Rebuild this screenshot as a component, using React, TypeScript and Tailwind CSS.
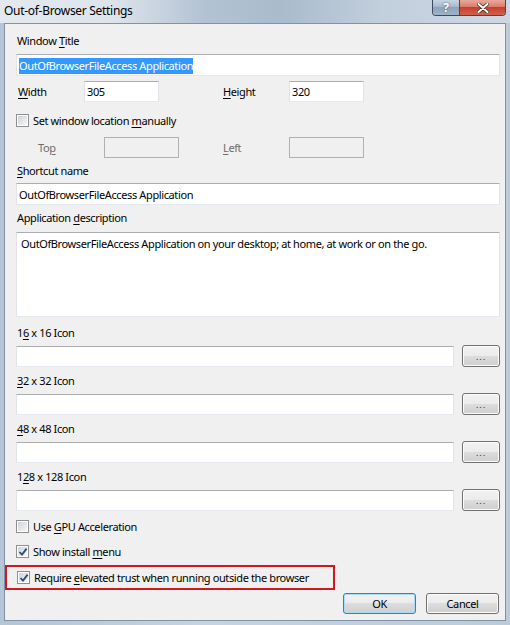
const ui = "font-['Noto_Sans',sans-serif] text-[11px] tracking-[-0.38px] leading-[16px] text-black";

function U({ children }: { children: string }) {
  return <span className="underline underline-offset-[2px] decoration-[1px]">{children}</span>;
}

function Box({ checked = false }: { checked?: boolean }) {
  return (
    <div className="relative h-[13px] w-[13px] shrink-0 border border-[#8e8f8f] bg-white p-[1px]">
      <div className="h-full w-full bg-gradient-to-br from-[#cfd3d8] to-[#f7f7f7]" />
      {checked && (
        <svg className="absolute left-[1px] top-[1px]" width="10" height="10" viewBox="0 0 10 10">
          <path d="M1.5 5 L4 7.6 L8.6 1.6" fill="none" stroke="#2c4a7c" strokeWidth="1.8" />
        </svg>
      )}
    </div>
  );
}

function Field({
  value,
  disabled = false,
  className = "",
  children,
}: {
  value?: string;
  disabled?: boolean;
  className?: string;
  children?: React.ReactNode;
}) {
  const look = disabled
    ? "border-[#adb2b5] bg-[#f0f0f0]"
    : "border-[#e2e3ea] border-t-[#abadb3] border-b-[#e3e9ef] bg-white";
  return (
    <div className={`flex items-center border px-[2px] pt-[1px] ${look} ${className}`}>
      {children ?? value}
    </div>
  );
}

function Btn({ children, primary = false, className = "" }: { children: React.ReactNode; primary?: boolean; className?: string }) {
  return (
    <div
      className={`flex items-center justify-center rounded-[3px] border ${
        primary ? "border-[#3c7fb1] shadow-[inset_0_0_0_1px_#a9dcf6]" : "border-[#707070] shadow-[inset_0_0_0_1px_#fcfcfc]"
      } bg-[linear-gradient(#f2f2f2_0%,#ebebeb_50%,#dddddd_50%,#cfcfcf_100%)] ${className}`}
    >
      {children}
    </div>
  );
}

function Check({ label, checked }: { label: React.ReactNode; checked?: boolean }) {
  return (
    <div className="flex h-[16px] items-center gap-[4px] whitespace-nowrap">
      <Box checked={checked} />
      <span className="pt-[1px]">{label}</span>
    </div>
  );
}

function IconRow({ label }: { label: React.ReactNode }) {
  return (
    <>
      <div className="mt-[5px] h-[16px] pl-[1px] pt-[1px]">{label}</div>
      <div className="mt-[5px] flex h-[22px] items-end gap-[8px]">
        <Field className="h-[21px] w-[438px]" />
        <Btn className="h-[22px] w-[38px] text-[9px] leading-none tracking-[1px] text-[#333]">...</Btn>
      </div>
    </>
  );
}

export default function App() {
  return (
    <div className={`${ui} flex h-[625px] w-[510px] flex-col bg-[linear-gradient(90deg,#b4c5d6,#c6d3e0_40%,#bccbda)]`}>
      {/* title bar */}
      <div className="relative flex h-[23px] shrink-0 items-start bg-[linear-gradient(90deg,#e3e9ef_0%,#dde4ec_22%,#b3c3d3_40%,#a9bbcc_55%,#c2cfdc_75%,#cdd8e3_100%)]">
        <span className="ml-[4px] mt-[2px] text-[12px] leading-[18px] tracking-[-0.3px]">Out-of-Browser Settings</span>
        <div className="absolute right-[4px] top-0 flex h-[16px] overflow-hidden rounded-b-[4px] border border-t-0 border-[#3b4a5c]">
          <div className="flex w-[27px] items-center justify-center border-r border-[#3b4a5c] bg-[linear-gradient(#c8d4e2,#a4b5c9_50%,#8ea3bb_50%,#9fb3c9)] text-[12px] font-bold leading-none text-white [text-shadow:0_0_2px_#3b4a5c]">
            ?
          </div>
          <div className="flex w-[45px] items-center justify-center bg-[linear-gradient(#e9a99b,#d87865_50%,#c7402c_50%,#d2604a)]">
            <svg width="12" height="10" viewBox="0 0 12 10">
              <path d="M1.5 1 L10.5 9 M10.5 1 L1.5 9" stroke="#3b2a28" strokeWidth="3.4" strokeLinecap="round" />
              <path d="M1.5 1 L10.5 9 M10.5 1 L1.5 9" stroke="#fff" strokeWidth="2" strokeLinecap="round" />
            </svg>
          </div>
        </div>
      </div>

      {/* client area */}
      <div className="ml-[4px] flex h-[598px] w-[502px] flex-col border border-[#7f92a7] bg-[#f0f0f0] pl-[11px] pr-[5px]">
        <div className="mt-[8px] h-[16px] pl-[1px] pt-[1px]">
          Window <U>T</U>itle
        </div>
        <Field className="mt-[6px] h-[22px] w-[484px]">
          <span className="bg-[#3399ff] text-white">OutOfBrowserFileAccess Application</span>
        </Field>

        <div className="mt-[5px] flex h-[21px] items-center">
          <span className="w-[68px] pl-[2px] pt-[1px]">
            <U>W</U>idth
          </span>
          <Field className="h-[21px] w-[75px]" value="305" />
          <span className="ml-[64px] w-[66px] pt-[1px]">
            <U>H</U>eight
          </span>
          <Field className="h-[21px] w-[75px]" value="320" />
        </div>

        <div className="mt-[10px]">
          <Check
            label={
              <>
                Set window location <U>m</U>anually
              </>
            }
          />
        </div>

        <div className="mt-[9px] flex h-[21px] items-center text-[#6d6d6d]">
          <span className="w-[88px] pl-[22px] pt-[1px]">
            To<U>p</U>
          </span>
          <Field disabled className="h-[21px] w-[75px]" />
          <span className="ml-[44px] w-[66px] pt-[1px]">
            <U>L</U>eft
          </span>
          <Field disabled className="h-[21px] w-[75px]" />
        </div>

        <div className="mt-[4px] h-[16px] pl-[1px] pt-[1px]">
          <U>S</U>hortcut name
        </div>
        <Field className="mt-[5px] h-[22px] w-[484px]" value="OutOfBrowserFileAccess Application" />

        <div className="mt-[4px] h-[16px] pl-[1px] pt-[1px]">
          Application <U>d</U>escription
        </div>
        <div className="mt-[7px] h-[85px] w-[484px] border border-[#e2e3ea] border-t-[#abadb3] border-b-[#e3e9ef] bg-white px-[4px] pt-[3px]">
          OutOfBrowserFileAccess Application on your desktop; at home, at work or on the go.
        </div>

        <div className="mt-[2px]" />
        <IconRow
          label={
            <>
              1<U>6</U> x 16 Icon
            </>
          }
        />
        <IconRow
          label={
            <>
              <U>3</U>2 x 32 Icon
            </>
          }
        />
        <IconRow
          label={
            <>
              <U>4</U>8 x 48 Icon
            </>
          }
        />
        <IconRow
          label={
            <>
              1<U>2</U>8 x 128 Icon
            </>
          }
        />

        <div className="mt-[7px]">
          <Check
            label={
              <>
                Use <U>G</U>PU Acceleration
              </>
            }
          />
        </div>
        <div className="mt-[9px]">
          <Check
            checked
            label={
              <>
                Show install <U>m</U>enu
              </>
            }
          />
        </div>

        <div className="-ml-[11px] mt-[6px] flex h-[25px] w-[330px] items-center border-2 border-[#d01820] pl-[10px]">
          <Check
            checked
            label={
              <>
                Require <U>e</U>levated trust when running outside the browser
              </>
            }
          />
        </div>

        <div className="mt-[3px] flex justify-end gap-[10px] pr-[1px]">
          <Btn primary className="h-[21px] w-[73px]">
            OK
          </Btn>
          <Btn className="h-[21px] w-[73px]">Cancel</Btn>
        </div>
      </div>
    </div>
  );
}
